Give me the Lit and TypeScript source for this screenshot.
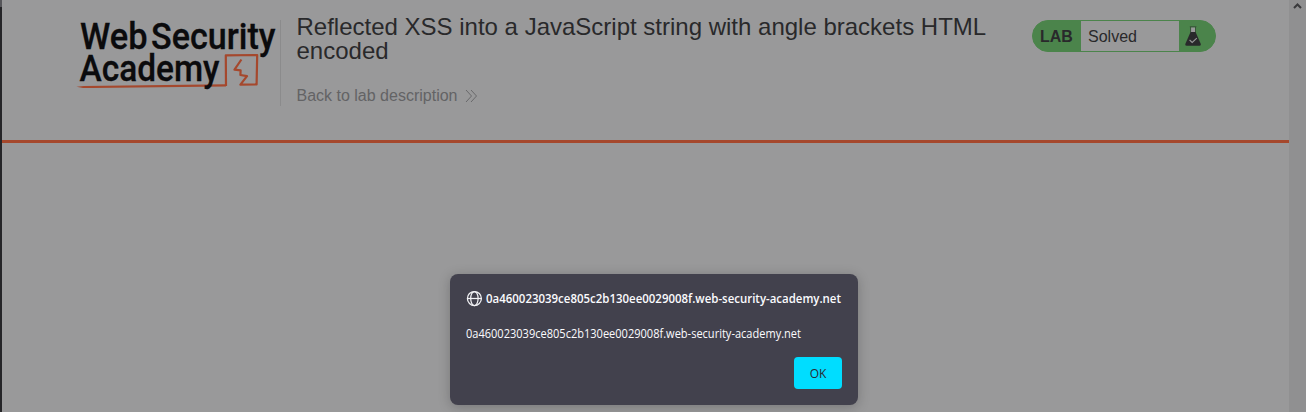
import { LitElement, html, css } from "lit";
import { customElement } from "lit/decorators.js";

const HOST = "0a460023039ce805c2b130ee0029008f.web-security-academy.net";

@customElement("academy-logo")
class AcademyLogo extends LitElement {
  static styles = css`
    :host { display: block; width: 202px; height: 80px; }
    svg { display: block; overflow: visible; }
    .word { font: 500 37.5px Roboto, sans-serif; fill: #0b0b0d; stroke: #0b0b0d; stroke-width: .3; }
    .line { fill: none; stroke: #a5482d; stroke-width: 2.2; stroke-linejoin: round; }
    .tail { fill: #a5482d; }
  `;
  render() {
    return html`<svg width="202" height="80" viewBox="76 15 202 80">
      <path class="tail" d="M76.5 86.8 L84 85.9 L226 84.2 V86.5 L92 88.1 L83 88 Z" />
      <path class="line" d="M226 86 L225.8 55.4 L257.2 55 L256.6 84.4 L240.4 84.7 L247 76.2 L240.4 75 L240.6 70.4 L234.5 69.7 L241.4 59.5" />
      <text class="word" x="80" y="48.5" textLength="67.5" lengthAdjust="spacingAndGlyphs">Web</text>
      <text class="word" x="151" y="48.5" textLength="124.5" lengthAdjust="spacingAndGlyphs">Security</text>
      <text class="word" x="79.5" y="81" textLength="140" lengthAdjust="spacingAndGlyphs">Academy</text>
    </svg>`;
  }
}

@customElement("lab-status")
class LabStatus extends LitElement {
  static styles = css`
    :host { display: flex; box-sizing: border-box; width: 184px; height: 32px; border: 1px solid #4b844b; border-radius: 16px; background: #4b844b; overflow: hidden; font: 16px/32px "Liberation Sans", Arial, sans-serif; color: #29292b; }
    .label { width: 48px; box-sizing: border-box; padding-left: 7px; font-weight: 700; }
    .state { width: 98px; box-sizing: border-box; padding-left: 7px; background: #99999a; }
    .flask { display: block; margin: 5px 0 0 5px; }
  `;
  render() {
    return html`<span class="label">LAB</span><span class="state">Solved</span>
      <svg class="flask" width="18" height="21" viewBox="0 0 18 21">
        <path d="M7 1.5h4v5H7z" fill="#99999a" />
        <path d="M5.8 .7h6.6M6.6 1v5.5M11.5 1v5.5" stroke="#29292b" stroke-width=".5" fill="none" />
        <path d="M6.6 6h5l5.2 12q.5 1.8-1.2 1.8H2.5q-1.7 0-1.2-1.8z" fill="#29292b" />
        <path d="M5.6 14l2.6 2.5 4.6-4.4" fill="none" stroke="#99999a" stroke-width="1.1" />
      </svg>`;
  }
}

@customElement("alert-dialog")
class AlertDialog extends LitElement {
  static styles = css`
    :host { display: flex; flex-direction: column; box-sizing: border-box; width: 408px; height: 131px; padding: 16px; border-radius: 8px; background: #42414d; box-shadow: 0 2px 12px rgba(20, 20, 25, .25); color: #fbfbfe; font: 12px/18px "Open Sans", "Noto Sans", sans-serif; }
    .title { display: flex; align-items: center; gap: 4px; height: 18px; font-weight: 600; white-space: nowrap; }
    .message { margin-top: 17px; height: 18px; white-space: nowrap; }
    .title text, .message text { fill: #fbfbfe; }
    svg { display: block; flex: none; overflow: visible; }
    button { align-self: flex-end; margin-top: 14px; width: 48px; height: 32px; padding: 1px 0 0; border: 0; border-radius: 4px; background: #00ddff; color: #2b2a33; font: 12px/31px "Open Sans", "Noto Sans", sans-serif; }
  `;
  render() {
    return html`<div class="title">
        <svg width="16" height="16" viewBox="0 0 16 16" fill="none" stroke="#f2f2f5" stroke-width="1.25">
          <circle cx="8.4" cy="7.5" r="7" />
          <ellipse cx="8.4" cy="7.5" rx="3.7" ry="7" />
          <path d="M1.4 7.5h14" />
        </svg>
        <svg width="355" height="18"><text x="0" y="13" textLength="355" lengthAdjust="spacingAndGlyphs">${HOST}</text></svg>
      </div>
      <div class="message"><svg width="335" height="18"><text x="0" y="13" textLength="335" lengthAdjust="spacingAndGlyphs">${HOST}</text></svg></div>
      <button>OK</button>`;
  }
}

@customElement("app-root")
class AppRoot extends LitElement {
  static styles = css`
    :host { display: flex; position: relative; width: 1306px; height: 412px; overflow: hidden; background: #99999a; font-family: "Liberation Sans", Arial, sans-serif; color: #29292b; }
    .edge { width: 2px; background: linear-gradient(#56565a 7px, #252528 7px); }
    .page { width: 1287px; }
    .header { display: flex; box-sizing: border-box; height: 143px; padding: 15px 0 0 74px; border-bottom: 3px solid #a5482d; }
    .brand { width: 204px; }
    .divider { width: 1px; height: 86px; margin-top: 5px; background: #8b8b8c; }
    .intro { width: 719.5px; padding-left: 15.5px; }
    h2 { margin: 0; font-size: 24px; line-height: 24px; font-weight: 400; }
    .back { display: flex; align-items: center; gap: 8px; margin-top: 24px; height: 18px; font-size: 16px; line-height: 18px; color: #636365; }
    lab-status { margin: 5px 0 0 16px; }
    .scrollbar { width: 17px; background: #909091; }
    .scrollbar svg { display: block; }
    alert-dialog { position: absolute; left: 450px; top: 274px; }
  `;
  render() {
    return html`<div class="edge"></div>
      <div class="page">
        <div class="header">
          <div class="brand"><academy-logo></academy-logo></div>
          <div class="divider"></div>
          <div class="intro">
            <h2>Reflected XSS into a JavaScript string with angle brackets HTML encoded</h2>
            <div class="back"><span>Back to lab description</span>
              <svg width="13" height="14" viewBox="0 0 13 14" fill="none" stroke="#69696b" stroke-width="1"><path d="M1 1l5.5 6L1 13M6 1l5.5 6L6 13" /></svg>
            </div>
          </div>
          <lab-status></lab-status>
        </div>
      </div>
      <div class="scrollbar"><svg width="17" height="17" viewBox="0 0 17 17"><path d="M5 8l3.5-3.5L12 8" fill="none" stroke="#3a3a3c" stroke-width="2" /></svg></div>
      <alert-dialog></alert-dialog>`;
  }
}
